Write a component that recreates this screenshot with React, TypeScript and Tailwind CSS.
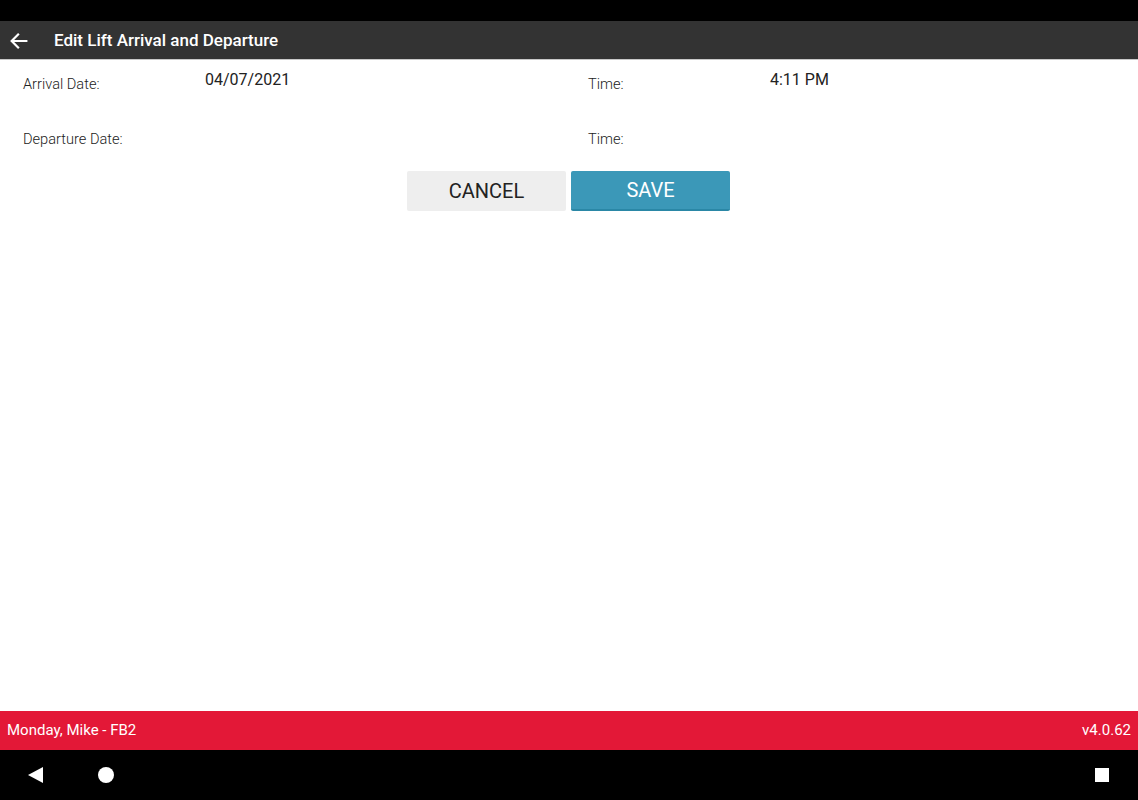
import React from 'react';

const Field: React.FC<{ label: string; value?: string; width: string }> = ({ label, value, width }) => (
    <div className={`flex shrink-0 ${width}`}>
        <div className="w-[182px] pt-[6px] text-[14.6px] leading-[20px] font-light text-[#222]">{label}</div>
        <div className="text-[16px] leading-[24px] text-[#222]">{value}</div>
    </div>
);

export default function App() {
    return (
        <div className="w-[1138px] h-[800px] flex flex-col bg-white" style={{ fontFamily: 'Roboto, "Liberation Sans", sans-serif' }}>
            <div className="h-[21px] bg-black" />
            <div className="h-[39px] pt-[2px] bg-[#333333] border-b border-[#c8c8c8] flex items-center text-white">
                <svg className="ml-[8px]" width="22" height="22" viewBox="0 0 24 24" fill="none" stroke="white" strokeWidth="2.4" strokeLinecap="square">
                    <path d="M20 12H5M11 5l-7 7 7 7" />
                </svg>
                <span className="ml-[24px] text-[17px] font-medium">Edit Lift Arrival and Departure</span>
            </div>

            <div className="flex-1 flex flex-col">
                <div className="pl-[23px] pt-[8px] flex">
                    <Field width="w-[565px]" label="Arrival Date:" value="04/07/2021" />
                    <Field width="w-[500px]" label="Time:" value="4:11 PM" />
                </div>
                <div className="pl-[23px] pt-[29px] flex">
                    <Field width="w-[565px]" label="Departure Date:" />
                    <Field width="w-[500px]" label="Time:" />
                </div>
                <div className="flex justify-center gap-[5px] mt-[22px] pr-[1px]">
                    <button className="w-[159px] h-[40px] rounded-[2px] bg-[#eeeeee] text-[20px] text-[#222]">CANCEL</button>
                    <button className="w-[159px] h-[40px] rounded-[2px] bg-[#3b98b8] border-b-2 border-[#2a87a6] text-[20px] text-white">SAVE</button>
                </div>
            </div>

            <div className="h-[39px] bg-[#e31837] flex items-center justify-between px-[7px] text-white text-[15px]">
                <span>Monday, Mike - FB2</span>
                <span>v4.0.62</span>
            </div>
            <div className="h-[50px] bg-black relative">
                <svg className="absolute left-[28px] top-[17px]" width="16" height="16" viewBox="0 0 16 16">
                    <path d="M15 0L0 8l15 8z" fill="white" />
                </svg>
                <div className="absolute left-[98px] top-[17px] w-[16px] h-[16px] rounded-full bg-white" />
                <div className="absolute left-[1095px] top-[18px] w-[14px] h-[14px] bg-white" />
            </div>
        </div>
    );
}
